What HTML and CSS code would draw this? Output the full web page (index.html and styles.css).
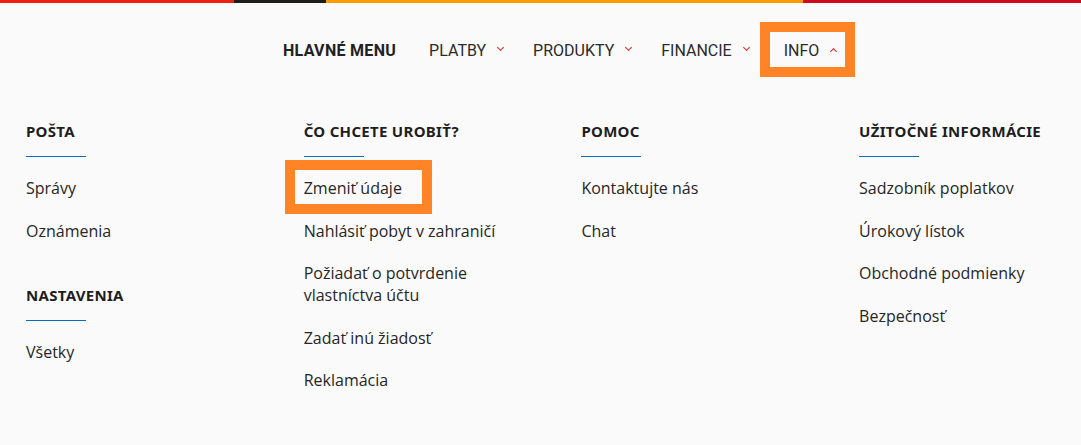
FILE: index.html
```html
<!DOCTYPE html>
<html lang="sk">
<head>
  <meta charset="UTF-8" />
  <meta name="viewport" content="width=device-width, initial-scale=1.0" />
  <title>Menu</title>
  <link rel="stylesheet" href="styles.css">
</head>
<body>
  <div class="stripe">
    <span class="red"></span>
    <span class="black"></span>
    <span class="orange"></span>
    <span class="crimson"></span>
  </div>

  <nav class="main-nav">
    <span class="nav-title">HLAVNÉ MENU</span>
    <a href="#" class="nav-item">PLATBY <span class="chev"></span></a>
    <a href="#" class="nav-item">PRODUKTY <span class="chev"></span></a>
    <a href="#" class="nav-item">FINANCIE <span class="chev"></span></a>
    <a href="#" class="nav-item open marked">INFO <span class="chev up"></span></a>
  </nav>

  <div class="mega">
    <div class="col">
      <h3>POŠTA</h3>
      <ul>
        <li><a href="#">Správy</a></li>
        <li><a href="#">Oznámenia</a></li>
      </ul>
      <h3 class="next">NASTAVENIA</h3>
      <ul>
        <li><a href="#">Všetky</a></li>
      </ul>
    </div>

    <div class="col">
      <h3>ČO CHCETE UROBIŤ?</h3>
      <ul>
        <li><a href="#" class="marked">Zmeniť údaje</a></li>
        <li><a href="#">Nahlásiť pobyt v zahraničí</a></li>
        <li><a href="#">Požiadať o potvrdenie<br>vlastníctva účtu</a></li>
        <li><a href="#">Zadať inú žiadosť</a></li>
        <li><a href="#">Reklamácia</a></li>
      </ul>
    </div>

    <div class="col">
      <h3>POMOC</h3>
      <ul>
        <li><a href="#">Kontaktujte nás</a></li>
        <li><a href="#">Chat</a></li>
      </ul>
    </div>

    <div class="col">
      <h3>UŽITOČNÉ INFORMÁCIE</h3>
      <ul>
        <li><a href="#">Sadzobník poplatkov</a></li>
        <li><a href="#">Úrokový lístok</a></li>
        <li><a href="#">Obchodné podmienky</a></li>
        <li><a href="#">Bezpečnosť</a></li>
      </ul>
    </div>
  </div>
</body>
</html>
```

FILE: styles.css
```css
body {
  font-family: "Open Sans", sans-serif;
  background-color: #fafafa;
  margin: 0;
  padding: 0;
  color: #262626;
}

a {
  color: inherit;
  text-decoration: none;
}

.stripe {
  display: flex;
  height: 3px;
}

.stripe .red { width: 234px; background: #ee1f0f; }
.stripe .black { width: 92px; background: #1d1d1b; }
.stripe .orange { width: 477px; background: #ff9900; }
.stripe .crimson { flex: 1; background: #d00a1e; }

.main-nav {
  display: flex;
  align-items: center;
  height: 42px;
  margin-top: 26px;
  padding-left: 283px;
  font-family: Roboto, sans-serif;
  font-size: 16px;
}

.nav-title {
  font-weight: bold;
  font-size: 16px;
  letter-spacing: 0.3px;
  margin-right: 17px;
  color: #222;
}

.nav-item {
  position: relative;
  display: flex;
  align-items: center;
  height: 42px;
  padding: 0 14px 0 16px;
  color: #2a2a2a;
}

.nav-item.open {
  margin-left: 5px;
}

.chev {
  width: 4px;
  height: 4px;
  margin-left: 12px;
  border-right: 1.5px solid #e0262c;
  border-bottom: 1.5px solid #e0262c;
  transform: translateY(-3px) rotate(45deg);
}

.chev.up {
  transform: translateY(1px) rotate(-135deg);
}

.marked {
  position: relative;
}

.marked::after {
  content: "";
  position: absolute;
  box-sizing: border-box;
  border: 10px solid #ff8426;
  pointer-events: none;
}

.nav-item.marked::after {
  left: -8px;
  top: -7px;
  width: 95px;
  height: 55px;
}

.mega {
  display: grid;
  grid-template-columns: repeat(3, 277.7px) 1fr;
  padding: 50px 0 0 26px;
}

.col h3 {
  margin: 0;
  font-family: "Noto Sans", sans-serif;
  font-size: 15px;
  font-weight: bold;
  line-height: 20px;
  letter-spacing: 0.3px;
  color: #1e1e1e;
}

.col h3::after {
  content: "";
  display: block;
  width: 60px;
  height: 1px;
  margin-top: 15px;
  background: #0b6cbd;
}

.col h3.next {
  margin-top: 43px;
}

.col ul {
  list-style: none;
  margin: 20px 0 0;
  padding: 0;
  display: flex;
  flex-direction: column;
  gap: 20.5px;
}

.col li {
  font-size: 16px;
  line-height: 22px;
}

.col li a {
  display: inline-block;
}

.col li a.marked::after {
  left: -19px;
  top: -17px;
  width: 147px;
  height: 54px;
}
```
